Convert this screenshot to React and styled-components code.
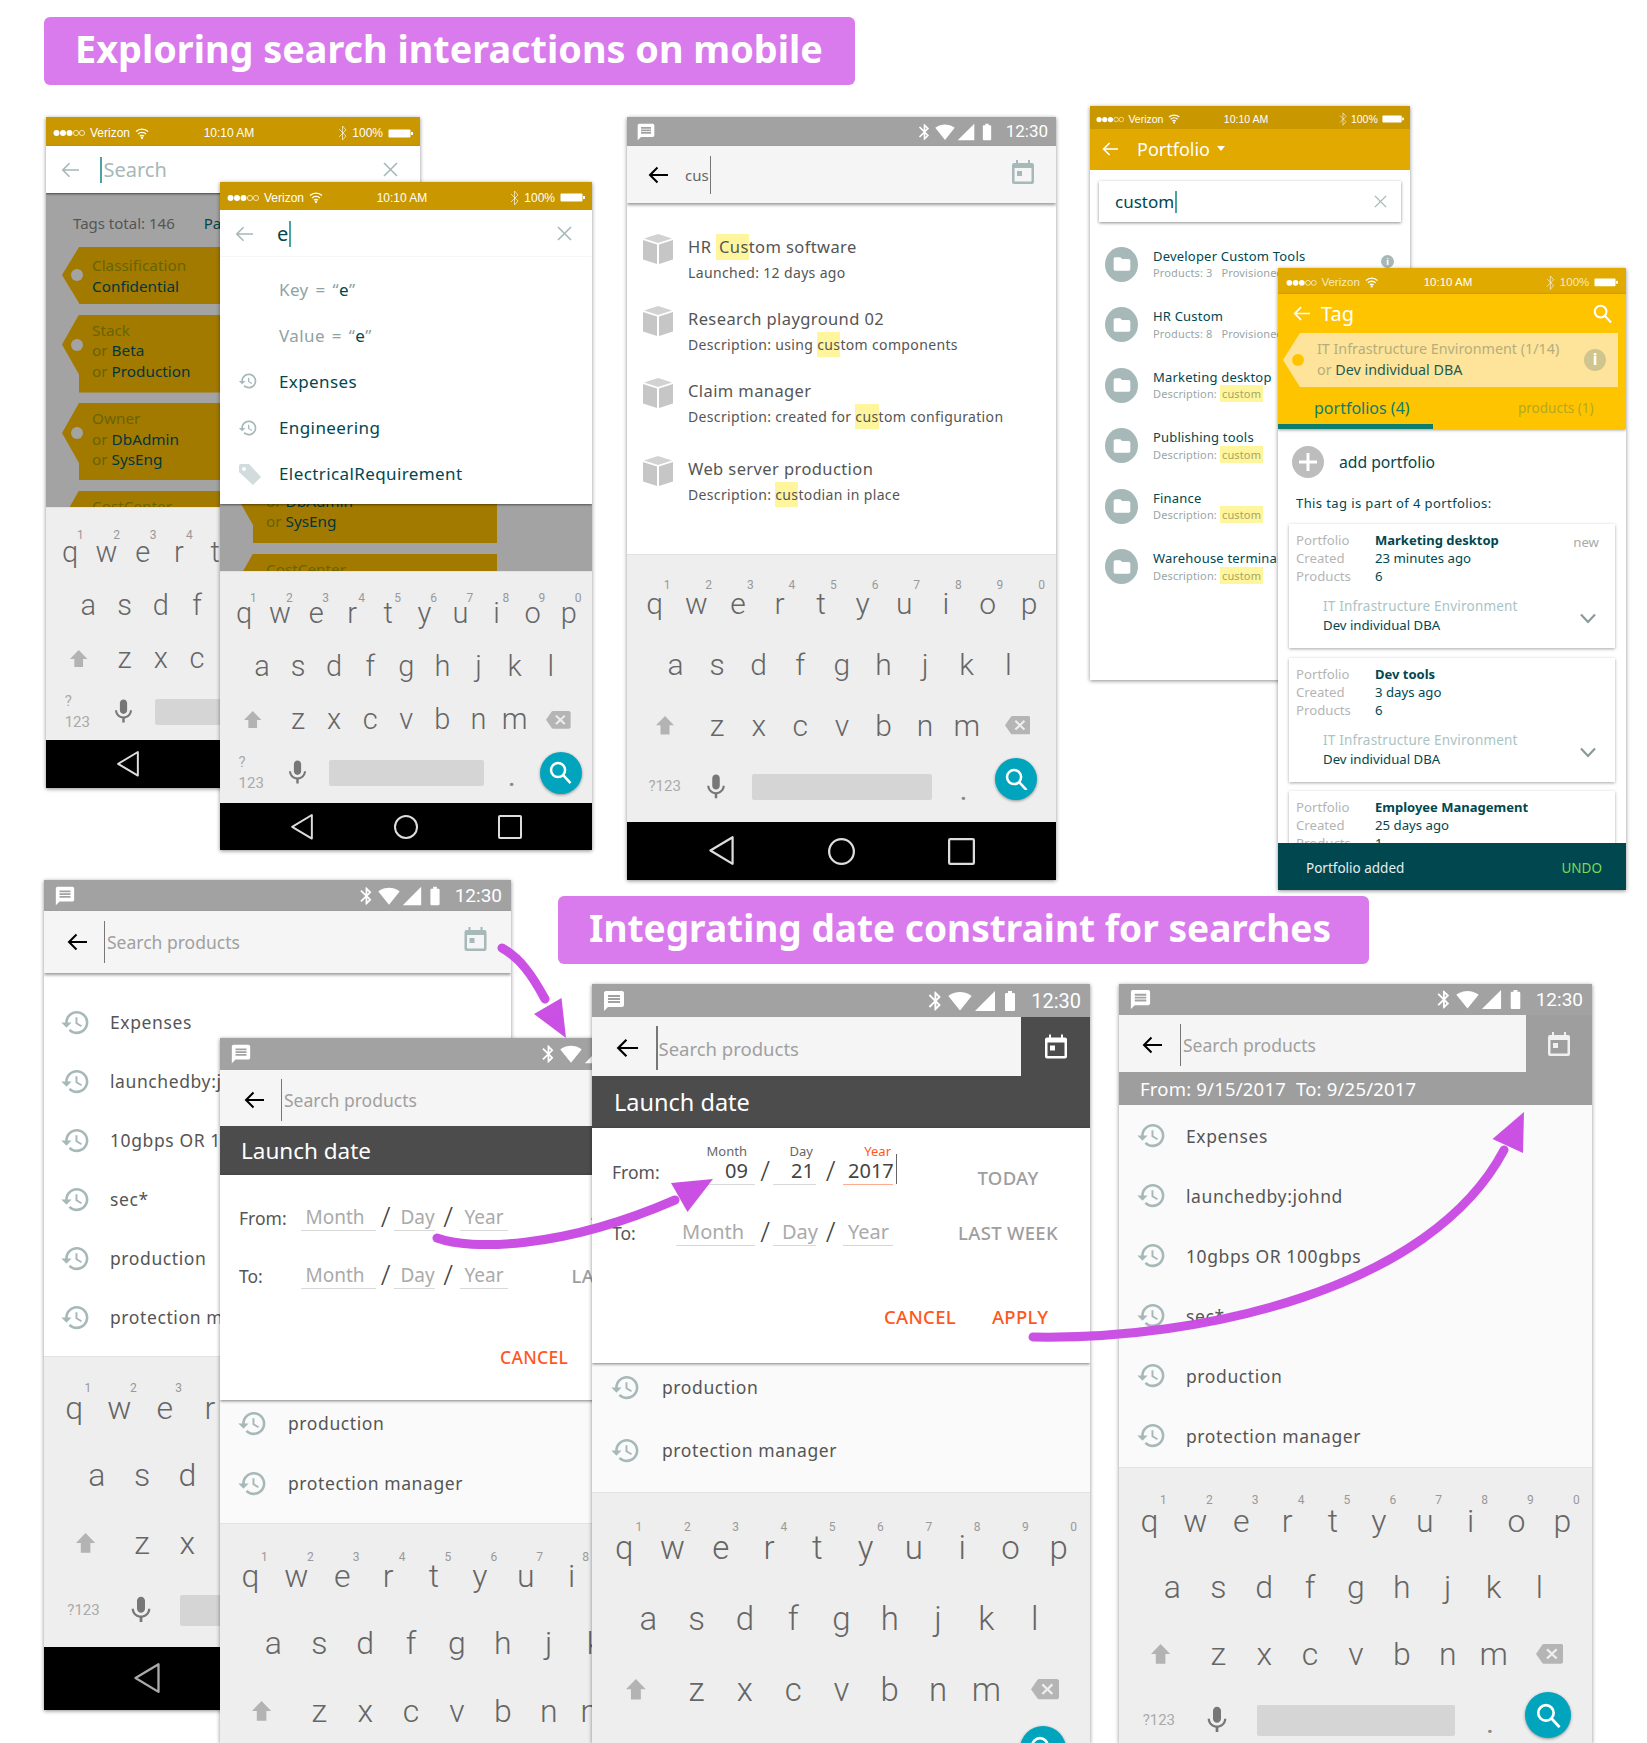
import React from 'react';
import styled, { createGlobalStyle } from 'styled-components';

const UI = `"Noto Sans", "Open Sans", sans-serif`;
const KB = `Roboto, "Noto Sans", sans-serif`;
const TEAL = '#00474f';
const SAGE = '#a6b8b8';

const Global = createGlobalStyle`
  html, body { margin: 0; padding: 0; background: #fff; }
  body { font-family: ${UI}; }
`;

const Canvas = styled.div`
  position: relative;
  width: 1647px;
  height: 1743px;
  overflow: hidden;
  background: #fff;
`;

const Banner = styled.div`
  position: absolute;
  left: ${p => p.$x}px;
  top: ${p => p.$y}px;
  width: ${p => p.$w}px;
  height: 68px;
  box-sizing: border-box;
  padding: 0 0 4px 31px;
  display: flex;
  align-items: center;
  background: #d97bec;
  border-radius: 6px;
  color: #fff;
  font: 700 ${p => p.$fs}px/1 ${UI};
  white-space: nowrap;
`;

const Phone = styled.div`
  position: absolute;
  isolation: isolate;
  left: ${p => p.$x}px;
  top: ${p => p.$y}px;
  width: ${p => p.$w}px;
  height: ${p => p.$h}px;
  display: flex;
  flex-direction: column;
  overflow: hidden;
  background: #fff;
  box-shadow: 0 1px 4px rgba(0, 0, 0, 0.45);
`;

/* ---------- status bars ---------- */
const IosBar = styled.div`
  flex: none;
  height: ${p => p.$h}px;
  box-sizing: border-box;
  padding-top: 3px;
  background: ${p => p.$bg};
  display: grid;
  grid-template-columns: 1fr auto 1fr;
  align-items: center;
  padding-left: ${p => p.$pad}px;
  padding-right: ${p => p.$pad}px;
  color: #fff;
  font: 400 ${p => p.$fs}px/1 "Liberation Sans", sans-serif;
`;
const IosLeft = styled.div`
  display: flex;
  align-items: center;
  gap: ${p => p.$gap}px;
`;
const IosRight = styled(IosLeft)`
  justify-content: flex-end;
`;
const IosTime = styled.div`
  margin-right: 8px;
`;
const Dim = styled.span`
  opacity: ${p => p.$o};
`;

const IosStatus = ({ h, bg, fs, pad = 7, dim = 1 }) => {
  const s = fs / 12;
  return (
    <IosBar $h={h} $bg={bg} $fs={fs} $pad={pad}>
      <IosLeft $gap={5 * s}>
        <svg width={32 * s} height={8 * s} viewBox="0 0 32 8">
          {[3.5, 10, 16.5].map(c => <circle key={c} cx={c} cy="4" r="3" fill="#fff" />)}
          {[23, 29].map(c => <circle key={c} cx={c} cy="4" r="2.6" fill="none" stroke="#fff" strokeWidth=".7" />)}
        </svg>
        <Dim $o={dim}>Verizon</Dim>
        <svg width={14 * s} height={11 * s} viewBox="0 0 14 11" fill="none" stroke="#fff" strokeWidth="1.4">
          <path d="M1 3.6a8.6 8.6 0 0 1 12 0M3 6a5.8 5.8 0 0 1 8 0M5 8.2a2.8 2.8 0 0 1 4 0" />
          <circle cx="7" cy="9.8" r=".5" />
        </svg>
      </IosLeft>
      <IosTime>10:10 AM</IosTime>
      <IosRight $gap={5 * s}>
        <svg width={9 * s} height={16 * s} viewBox="0 0 9 16" fill="none" stroke="#fff" strokeOpacity=".65" strokeWidth="1">
          <path d="M1 4l7 7-3.5 4V1L8 5 1 12" />
        </svg>
        <Dim $o={dim}>100%</Dim>
        <svg width={25 * s} height={9 * s} viewBox="0 0 25 9">
          <rect x=".5" y=".5" width="22" height="8" rx="1" fill="#fff" />
          <rect x="23" y="3" width="2" height="3" fill="#fff" />
        </svg>
      </IosRight>
    </IosBar>
  );
};

const DroidBar = styled.div`
  flex: none;
  height: ${p => p.$h}px;
  background: #a2a2a2;
  display: flex;
  align-items: center;
  padding: 0 ${p => p.$pad}px 0 ${p => p.$pad + 1}px;
  color: #fff;
  font: 400 ${p => p.$fs}px/1 ${KB};
`;
const DroidIcons = styled.div`
  margin-left: auto;
  display: flex;
  align-items: center;
  gap: 1px;
  margin-right: 9px;
`;
const Mirror = styled.svg`
  transform: scaleX(-1);
`;

const DroidStatus = ({ h, fs, pad = 8, s = 22 }) => (
  <DroidBar $h={h} $fs={fs} $pad={pad}>
    <Mirror width={s} height={s} viewBox="0 0 24 24" fill="#fff">
      <path d="M21.99 4c0-1.1-.89-2-1.99-2H4c-1.1 0-2 .9-2 2v12c0 1.1.9 2 2 2h14l4 4-.01-18zM18 14H6v-2h12v2zm0-3H6V9h12v2zm0-3H6V6h12v2z" />
    </Mirror>
    <DroidIcons>
      <svg width={s * 0.95} height={s} viewBox="0 0 24 24" fill="#fff"><path d="M17.71 7.71L12 2h-1v7.59L6.41 5 5 6.41 10.59 12 5 17.59 6.41 19 11 14.41V22h1l5.71-5.71-4.3-4.29 4.3-4.29zM13 5.83l1.88 1.88L13 9.59V5.83zm1.88 10.46L13 18.17v-3.76l1.88 1.88z" /></svg>
      <svg width={s} height={s} viewBox="0 0 24 24" fill="#fff"><path d="M12.01 21.49L23.64 7c-.45-.34-4.93-4-11.64-4C5.28 3 .81 6.66.36 7l11.63 14.49.01.01.01-.01z" /></svg>
      <svg width={s} height={s} viewBox="0 0 24 24" fill="#fff"><path d="M2 22h20V2z" /></svg>
      <svg width={s} height={s} viewBox="0 0 24 24" fill="#fff"><path d="M15.67 4H14V2h-4v2H8.33C7.6 4 7 4.6 7 5.33v15.33C7 21.4 7.6 22 8.33 22h7.33c.74 0 1.34-.6 1.34-1.33V5.33C17 4.6 16.4 4 15.67 4z" /></svg>
    </DroidIcons>
    12:30
  </DroidBar>
);

/* ---------- small icons ---------- */
const ArrowBack = ({ size = 20, color = '#000', w = 2 }) => (
  <svg width={size} height={size} viewBox="0 0 20 20" fill="none" stroke={color} strokeWidth={w}>
    <path d="M20 10H2M9.5 2.5L2 10l7.5 7.5" />
  </svg>
);
const Cross = ({ size = 15, color = SAGE }) => (
  <svg width={size} height={size} viewBox="0 0 15 15" stroke={color} strokeWidth="1.6" fill="none">
    <path d="M1 1l13 13M14 1L1 14" />
  </svg>
);
const Calendar = ({ w = 24, h = 26, color = SAGE }) => (
  <svg width={w} height={h} viewBox="0 0 24 26" fill={color}>
    <path fillRule="evenodd" d="M5 1h2v3h10V1h2v3h2a2 2 0 0 1 2 2v17a2 2 0 0 1-2 2H3a2 2 0 0 1-2-2V6a2 2 0 0 1 2-2h2zM3.5 9v13.5h17V9z" />
    <rect x="6" y="12" width="5" height="5" />
  </svg>
);
const History = ({ size = 31 }) => (
  <svg width={size} height={size} viewBox="0 0 24 24" fill={SAGE}>
    <path d="M13 3c-4.97 0-9 4.03-9 9H1l3.89 3.89.07.14L9 12H6c0-3.87 3.13-7 7-7s7 3.13 7 7-3.13 7-7 7c-1.93 0-3.68-.79-4.94-2.06l-1.42 1.42C8.27 19.99 10.51 21 13 21c4.97 0 9-4.03 9-9s-4.03-9-9-9zm-1 5v5l4.28 2.54.72-1.21-3.5-2.08V8H12z" />
  </svg>
);
const Cube = () => (
  <svg width="30" height="30" viewBox="0 0 30 30">
    <path d="M15 0l14 4.5L15 9 1 4.5z" fill="#d2d2d2" />
    <path d="M0 6l14 4.5V30L0 25.5zM30 6l-14 4.5V30l14-4.5z" fill="#c6c6c6" />
  </svg>
);
const Folder = ({ size = 20 }) => (
  <svg width={size} height={size} viewBox="0 0 24 24" fill="#fff">
    <path d="M10 4H4c-1.1 0-2 .9-2 2v12c0 1.1.9 2 2 2h16c1.1 0 2-.9 2-2V8c0-1.1-.9-2-2-2h-8l-2-2z" />
  </svg>
);
const Magnifier = ({ size = 20, color = '#fff', w = 2.2 }) => (
  <svg width={size} height={size} viewBox="0 0 20 20" fill="none" stroke={color} strokeWidth={w}>
    <circle cx="8" cy="8" r="6.2" />
    <path d="M12.5 12.5l6.5 7" />
  </svg>
);
const Chevron = () => (
  <svg width="16" height="11" viewBox="0 0 16 11" fill="none" stroke="#8a9a9a" strokeWidth="2.2">
    <path d="M1 1.5l7 7.5 7-7.5" />
  </svg>
);
const PriceTag = () => (
  <svg width="24" height="24" viewBox="0 0 24 24" fill="#d3dcdc">
    <path d="M1 4a2 2 0 0 1 2-2h8l12 13-8 8L1 10zM6 5a2 2 0 1 0 0 4 2 2 0 0 0 0-4z" fillRule="evenodd" />
  </svg>
);

/* ---------- search bars ---------- */
const SearchRow = styled.div`
  flex: none;
  height: ${p => p.$h}px;
  background: ${p => p.$bg || '#f5f5f5'};
  display: flex;
  position: relative;
  z-index: 1;
  box-shadow: ${p => (p.$flat ? 'none' : '0 2px 3px rgba(0,0,0,0.4)')};
`;
const SearchField = styled.div`
  flex: ${p => (p.$w ? `0 0 ${p.$w}px` : '1')};
  box-sizing: border-box;
  padding-top: ${p => p.$pt || 0}px;
  background: #f5f5f5;
  display: flex;
  align-items: center;
  color: #a0a0a0;
  font-size: ${p => p.$fs}px;
`;
const BackSlot = styled.div`
  flex: none;
  width: ${p => p.$w}px;
  box-sizing: border-box;
  padding-left: ${p => p.$pl}px;
  display: flex;
  align-items: center;
`;
const Caret = styled.i`
  flex: none;
  width: ${p => p.$t || 1}px;
  height: ${p => p.$h}px;
  background: ${p => p.$c || '#777'};
  margin-right: ${p => p.$mr || 0}px;
  margin-left: ${p => p.$ml || 0}px;
`;
const CalInline = styled.div`
  margin-left: auto;
  margin-right: ${p => p.$mr}px;
  margin-top: -6px;
  display: flex;
`;
const CalSlot = styled.div`
  flex: 1;
  display: flex;
  align-items: center;
  justify-content: center;
`;
const Typed = styled.span`
  color: #666;
`;

/* ---------- white ios search ---------- */
const WhiteSearch = styled.div`
  flex: none;
  height: ${p => p.$h}px;
  background: #fff;
  display: flex;
  align-items: center;
  padding-left: ${p => p.$pl}px;
  padding-right: ${p => p.$pr}px;
  position: relative;
  z-index: 1;
  box-shadow: ${p => p.$shadow};
  color: ${p => p.$color};
  font-size: 20px;
`;
const WhiteLead = styled.div`
  flex: none;
  width: ${p => p.$w}px;
  display: flex;
`;
const WhiteEnd = styled.div`
  margin-left: auto;
  display: flex;
`;

/* ---------- keyboard ---------- */
const KbWrap = styled.div`
  flex: 1;
  min-height: 0;
  background: #eeeeee;
  padding-top: ${p => p.$top}px;
  border-top: 1px solid #e2e2e2;
  font-family: ${KB};
  color: #666;
`;
const KbRow = styled.div`
  display: flex;
  align-items: center;
  height: ${p => p.$h}px;
  & > :first-child {
    margin-left: ${p => p.$indent}%;
  }
`;
const Key = styled.span`
  flex: 0 0 9.7%;
  position: relative;
  text-align: center;
  font-weight: 300;
  font-size: ${p => p.$fs}px;
  line-height: 1;
  white-space: nowrap;
`;
const Hint = styled.sup`
  position: absolute;
  left: calc(50% + ${p => p.$off}px);
  top: -${p => p.$up}px;
  font-size: 12px;
  font-weight: 400;
  line-height: 1;
  color: #999;
`;
const ShiftSlot = styled.span`
  flex: 0 0 14.65%;
  display: flex;
  justify-content: center;
`;
const BackspaceSlot = styled.span`
  flex: 0 0 14%;
  display: flex;
  justify-content: center;
`;
const SymSlot = styled.span`
  flex: 0 0 15.4%;
  box-sizing: border-box;
  padding-left: 5%;
  color: #aaa;
  font-size: ${p => p.$fs}px;
  font-weight: 400;
  line-height: 1.35;
`;
const MicSlot = styled.span`
  flex: 0 0 10.8%;
  display: flex;
  justify-content: center;
`;
const SpaceBar = styled.span`
  flex: 0 0 41.8%;
  margin-left: 3%;
  height: ${p => p.$h}px;
  background: #d5d5d5;
  border-radius: 2px;
`;
const DotSlot = styled.span`
  flex: 0 0 14.9%;
  text-align: center;
  color: #888;
  font-size: 22px;
  font-weight: 700;
  line-height: 1;
  padding-top: 12px;
`;
const Fab = styled.span`
  flex: none;
  width: ${p => p.$d}px;
  height: ${p => p.$d}px;
  margin-top: ${p => p.$lift || 0}px;
  border-radius: 50%;
  background: #00a5bd;
  box-shadow: 0 1px 3px rgba(0, 0, 0, 0.4);
  display: flex;
  align-items: center;
  justify-content: center;
`;

const Keyboard = ({ top, pitch, fs, up, off = 10.5, stacked, bar = 26, fab = 42, lift }) => (
  <KbWrap $top={top}>
    <KbRow $h={pitch} $indent={1.6}>
      {'qwertyuiop'.split('').map((k, i) => (
        <Key key={k} $fs={fs}>{k}<Hint $up={up} $off={off}>{(i + 1) % 10}</Hint></Key>
      ))}
    </KbRow>
    <KbRow $h={pitch} $indent={6.45}>
      {'asdfghjkl'.split('').map(k => <Key key={k} $fs={fs}>{k}</Key>)}
    </KbRow>
    <KbRow $h={pitch} $indent={1.5}>
      <ShiftSlot>
        <svg width={fs * 0.6} height={fs * 0.62} viewBox="0 0 20 24" preserveAspectRatio="none" fill="#b3b3b3"><path d="M10 0l10 12h-5v12H5V12H0z" /></svg>
      </ShiftSlot>
      {'zxcvbnm'.split('').map(k => <Key key={k} $fs={fs}>{k}</Key>)}
      <BackspaceSlot>
        <svg width={fs * 0.85} height={fs * 0.68} viewBox="0 2 24 20" preserveAspectRatio="none" fill="#b5b5b5"><path d="M22 3H7c-.69 0-1.23.35-1.59.88L0 12l5.41 8.11c.36.53.9.89 1.59.89h15c1.1 0 2-.9 2-2V5c0-1.1-.9-2-2-2zm-3 12.59L17.59 17 14 13.41 10.41 17 9 15.59 12.59 12 9 8.41 10.41 7 14 10.59 17.59 7 19 8.41 15.41 12 19 15.59z" /></svg>
      </BackspaceSlot>
    </KbRow>
    <KbRow $h={pitch} $indent={0}>
      <SymSlot $fs={15}>{stacked ? <>?<br />123</> : '?123'}</SymSlot>
      <MicSlot>
        <svg width={fs} height={fs} viewBox="0 0 24 24" fill="#777"><path d="M12 14c1.66 0 3-1.34 3-3V5c0-1.66-1.34-3-3-3S9 3.34 9 5v6c0 1.66 1.34 3 3 3zm5.3-3c0 3-2.54 5.1-5.3 5.1S6.7 14 6.7 11H5c0 3.41 2.72 6.23 6 6.72V21h2v-3.28c3.28-.48 6-3.3 6-6.72h-1.7z" /></svg>
      </MicSlot>
      <SpaceBar $h={bar} />
      <DotSlot>.</DotSlot>
      <Fab $d={fab} $lift={lift}><Magnifier size={fab * 0.54} /></Fab>
    </KbRow>
  </KbWrap>
);

/* ---------- nav bar ---------- */
const NavBar = styled.div`
  flex: none;
  height: ${p => p.$h}px;
  background: #000;
  display: grid;
  grid-template-columns: repeat(3, 1fr);
  padding: 0 8%;
  align-items: center;
  justify-items: center;
`;
const Nav = ({ h, s = 24, color = '#ddd' }) => (
  <NavBar $h={h}>
    <svg width={s} height={s * 1.15} viewBox="0 0 24 28" fill="none" stroke={color} strokeWidth="2" strokeLinejoin="round"><path d="M22 2v24L2 14z" /></svg>
    <svg width={s} height={s} viewBox="0 0 24 24" fill="none" stroke={color} strokeWidth="2"><circle cx="12" cy="12" r="11" /></svg>
    <svg width={s} height={s} viewBox="0 0 24 24" fill="none" stroke={color} strokeWidth="2"><rect x="1" y="1" width="22" height="22" rx="1" /></svg>
  </NavBar>
);

/* ---------- dimmed tag list ---------- */
const Dimmed = styled.div`
  flex: none;
  height: ${p => p.$h}px;
  background: #a3a3a3;
  overflow: hidden;
  padding-left: ${p => p.$pl}px;
  font-size: 15px;
`;
const TotalsRow = styled.div`
  display: flex;
  height: 20px;
  margin-top: 20px;
  line-height: 20px;
  padding-left: 11px;
  color: #555;
`;
const Pa = styled.span`
  margin-left: 29px;
  color: ${TEAL};
`;
const TagList = styled.div`
  display: flex;
  flex-direction: column;
  gap: 10.5px;
  margin-top: ${p => p.$mt}px;
`;
const TagShape = styled.div`
  position: relative;
  flex: none;
  box-sizing: border-box;
  width: ${p => p.$w}px;
  height: ${p => p.$h}px;
  padding: ${p => p.$pt}px 0 0 ${p => p.$pl || 30}px;
  background: ${p => p.$bg || '#a37a00'};
  clip-path: polygon(17px 0, 100% 0, 100% 100%, 17px 100%, 17px ${p => p.$tip * 2}px, 0 ${p => p.$tip}px);
  font-size: ${p => p.$fs || 15.3}px;
  line-height: 20.5px;
  color: ${p => p.$key || '#686400'};
`;
const TagHole = styled.i`
  position: absolute;
  left: ${p => p.$l || 9}px;
  top: ${p => p.$tip - 6}px;
  width: 12px;
  height: 12px;
  border-radius: 50%;
  background: ${p => p.$bg || '#a3a3a3'};
`;
const TagLine = styled.div`
  white-space: nowrap;
`;
const TagVal = styled.span`
  color: ${p => p.$c || '#00363c'};
`;

const Tag = ({ w, h, tip, pt, lines }) => (
  <TagShape $w={w} $h={h} $tip={tip} $pt={pt}>
    <TagHole $tip={tip} />
    {lines.map((l, i) => (
      <TagLine key={i}>{l[0]}{l[1] && <> <TagVal>{l[1]}</TagVal></>}</TagLine>
    ))}
  </TagShape>
);

/* ---------- dropdown of phone B ---------- */
const SuggestList = styled.div`
  flex: none;
  height: 247px;
  background: #fff;
  position: relative;
  z-index: 1;
  padding-top: 17px;
  box-sizing: border-box;
  box-shadow: 0 1px 2px rgba(0, 0, 0, 0.5);
  display: flex;
  flex-direction: column;
  gap: 16.2px;
  font-size: 17px;
  letter-spacing: 0.4px;
`;
const Suggest = styled.div`
  height: 30px;
  display: flex;
  align-items: center;
  white-space: pre;
  word-spacing: ${p => (p.$muted ? '2px' : '0')};
  color: ${p => (p.$muted ? '#8fa3a3' : TEAL)};
`;
const SuggestIcon = styled.span`
  flex: none;
  width: 59px;
  box-sizing: border-box;
  padding-left: 18px;
  display: flex;
`;
const Em = styled.span`
  color: ${TEAL};
`;

/* ---------- result list of phone C ---------- */
const Results = styled.div`
  flex: none;
  height: 351px;
  box-sizing: border-box;
  background: #fff;
  padding: 31px 0 0 16px;
  display: flex;
  flex-direction: column;
`;
const ResultRow = styled.div`
  display: flex;
  gap: 15px;
  height: ${p => p.$h}px;
`;
const ResultText = styled.div`
  color: #555;
  font-size: 14px;
  letter-spacing: 0.35px;
  line-height: 25px;
  white-space: nowrap;
`;
const ResultTitle = styled.div`
  font-size: 16.5px;
  letter-spacing: 0.4px;
  line-height: 26px;
`;
const Hi = styled.span`
  display: inline-block;
  background: #fff59d;
  padding-left: ${p => p.$p || 0}px;
`;

/* ---------- history lists ---------- */
const HistoryList = styled.div`
  flex: none;
  height: ${p => p.$h}px;
  box-sizing: border-box;
  background: ${p => p.$bg || '#fafafa'};
  padding: ${p => p.$pt}px 0 0 ${p => p.$pl}px;
  display: flex;
  flex-direction: column;
  gap: ${p => p.$gap}px;
  overflow: hidden;
  color: #555;
  font-size: 17.5px;
  letter-spacing: 0.6px;
`;
const HistoryRow = styled.div`
  flex: none;
  height: 30px;
  display: flex;
  align-items: center;
  white-space: nowrap;
`;
const HistoryIcon = styled.span`
  flex: none;
  width: ${p => p.$w}px;
  display: flex;
`;

const HistoryItems = ({ items, iw }) => items.map(t => (
  <HistoryRow key={t}>
    <HistoryIcon $w={iw}><History /></HistoryIcon>{t}
  </HistoryRow>
));

/* ---------- date form ---------- */
const DarkTitle = styled.div`
  flex: none;
  height: ${p => p.$h}px;
  background: #4c4c4c;
  color: #fff;
  display: flex;
  align-items: center;
  padding-left: ${p => p.$pl}px;
  font-size: ${p => p.$fs}px;
`;
const DatePanel = styled.div`
  flex: none;
  height: ${p => p.$h}px;
  box-sizing: border-box;
  background: #fff;
  position: relative;
  z-index: 1;
  box-shadow: 0 1px 3px rgba(0, 0, 0, 0.5);
  padding-top: ${p => p.$pt}px;
  display: flex;
  flex-direction: column;
`;
const DateRow = styled.div`
  flex: none;
  height: 37px;
  display: flex;
  align-items: flex-end;
  margin-bottom: ${p => p.$mb}px;
  padding-left: ${p => p.$pl}px;
`;
const DateLabel = styled.span`
  flex: none;
  width: ${p => p.$w}px;
  box-sizing: border-box;
  color: #555;
  font-size: 17.5px;
  line-height: 26px;
`;
const DateField = styled.span`
  flex: none;
  position: relative;
  width: ${p => p.$w}px;
  box-sizing: border-box;
  border-bottom: 1.5px solid ${p => p.$line || '#d8d8d8'};
  padding-left: ${p => p.$pl || 0}px;
  padding-right: ${p => p.$pr || 0}px;
  text-align: ${p => (p.$pr !== undefined ? 'right' : 'left')};
  color: ${p => (p.$filled ? '#444' : '#aaa')};
  font-size: ${p => p.$fs}px;
  line-height: 26px;
  white-space: nowrap;
`;
const FieldCaption = styled.span`
  position: absolute;
  right: ${p => p.$r}px;
  top: -15px;
  font-size: 13px;
  line-height: 16px;
  color: ${p => p.$c || '#666'};
`;
const FieldCaret = styled.i`
  position: absolute;
  left: 100%;
  bottom: 0;
  margin-left: 3px;
  width: 1px;
  height: 30px;
  background: #666;
`;
const DateSep = styled.span`
  flex: none;
  width: ${p => p.$w}px;
  box-sizing: border-box;
  padding-left: 2px;
  text-align: center;
  color: #444;
  font-size: 28px;
  line-height: 30px;
  font-weight: 300;
`;
const QuickAction = styled.span`
  flex: none;
  width: 150px;
  margin-left: ${p => p.$ml}px;
  margin-bottom: ${p => p.$mb || 0}px;
  text-align: center;
  color: #9e9e9e;
  font-size: 18.5px;
  letter-spacing: 0.3px;
  font-weight: 500;
  line-height: 26px;
  white-space: nowrap;
`;
const DateActions = styled.div`
  display: flex;
  margin-top: ${p => p.$mt}px;
  padding-left: ${p => p.$pl}px;
  gap: ${p => p.$gap}px;
  color: #ff5722;
  font-size: ${p => p.$fs}px;
  letter-spacing: 0.3px;
  font-weight: 500;
  line-height: 24px;
`;
const RangeBand = styled.div`
  flex: none;
  height: 33px;
  margin-top: -0.5px;
  background: #9e9e9e;
  color: #fff;
  display: flex;
  align-items: center;
  padding-left: 21px;
  font-size: 18.5px;
  letter-spacing: 0.2px;
`;

/* ---------- phone D ---------- */
const Header = styled.div`
  flex: none;
  height: ${p => p.$h}px;
  box-sizing: border-box;
  background: ${p => p.$bg};
  color: #fff;
  display: flex;
  align-items: center;
  padding: 0 ${p => p.$pr || 0}px ${p => p.$pb || 0}px ${p => p.$pl}px;
  font-size: ${p => p.$fs}px;
`;
const HeaderTitle = styled.span`
  margin-left: ${p => p.$ml}px;
`;
const CaretDown = styled.i`
  width: 0;
  height: 0;
  margin-left: 7px;
  border: 4px solid transparent;
  border-top: 5px solid #fff;
  border-bottom: 0;
`;
const CardSearch = styled.div`
  flex: none;
  height: 41px;
  margin: 11px 9px 18px;
  background: #fff;
  box-shadow: 0 1px 3px rgba(0, 0, 0, 0.45);
  display: flex;
  align-items: center;
  padding: 0 14px 0 16px;
  color: ${TEAL};
  font-size: 17px;
`;
const PortfolioList = styled.div`
  display: flex;
  flex-direction: column;
  gap: 12.5px;
  padding-left: 15px;
`;
const PortfolioRow = styled.div`
  position: relative;
  height: 48px;
  display: flex;
  align-items: center;
  gap: 15px;
`;
const FolderBadge = styled.span`
  flex: none;
  width: 33px;
  height: 35px;
  border-radius: 50%;
  background: ${SAGE};
  display: flex;
  align-items: center;
  justify-content: center;
`;
const PortfolioText = styled.div`
  padding-top: 1px;
  line-height: 16.5px;
  white-space: nowrap;
  font-size: 13px;
  letter-spacing: 0.2px;
  color: ${TEAL};
`;
const PortfolioSub = styled.div`
  margin-top: 1px;
  font-size: 11px;
  letter-spacing: 0.15px;
  color: #9aa6a6;
`;
const Mark = styled.span`
  background: #fff59d;
  padding: 1px 2px;
  color: #a6a664;
`;
const InfoDot = styled.span`
  position: absolute;
  right: ${p => p.$r}px;
  top: ${p => p.$t}px;
  width: ${p => p.$d}px;
  height: ${p => p.$d}px;
  border-radius: 50%;
  background: ${p => p.$bg};
  color: #fff;
  display: flex;
  align-items: center;
  justify-content: center;
  font-size: ${p => p.$d * 0.7}px;
  font-weight: 700;
  line-height: 1;
`;

/* ---------- phone E ---------- */
const YellowBand = styled.div`
  flex: none;
  background: #ffc400;
  box-shadow: 0 1px 3px rgba(0, 0, 0, 0.4);
  position: relative;
  z-index: 1;
`;
const HeaderEnd = styled.span`
  margin-left: auto;
  display: flex;
`;
const TagRowWrap = styled.div`
  padding: 0 8px 0 5px;
`;
const Tabs = styled.div`
  height: 42px;
  display: flex;
`;
const Tab = styled.div`
  flex: ${p => (p.$w ? `0 0 ${p.$w}px` : '1')};
  box-sizing: border-box;
  padding-top: 4px;
  padding-left: ${p => p.$pl}px;
  display: flex;
  align-items: center;
  white-space: nowrap;
  font-size: ${p => p.$fs}px;
  color: ${p => p.$c};
  border-bottom: ${p => (p.$on ? '5px solid #0e7d6d' : '5px solid transparent')};
`;
const TagBody = styled.div`
  flex: 1;
  min-height: 0;
  overflow: hidden;
  padding: 0 11px;
  color: ${TEAL};
  display: flex;
  flex-direction: column;
`;
const AddRow = styled.div`
  flex: none;
  height: 32px;
  margin-top: 17px;
  padding-left: 3px;
  display: flex;
  align-items: center;
  gap: 15px;
  font-size: 15.7px;
`;
const AddBadge = styled.span`
  flex: none;
  width: 32px;
  height: 32px;
  border-radius: 50%;
  background: #bdbdbd;
  display: flex;
  align-items: center;
  justify-content: center;
`;
const PartOf = styled.div`
  flex: none;
  margin: 15px 0 11px 7px;
  font-size: 13px;
  letter-spacing: 0.4px;
  line-height: 20px;
`;
const PCard = styled.div`
  flex: none;
  position: relative;
  height: 124px;
  box-sizing: border-box;
  padding: 7px 7px;
  margin-bottom: 9.5px;
  background: #fff;
  box-shadow: 0 1px 3px rgba(0, 0, 0, 0.35);
  font-size: 13.2px;
  line-height: 18px;
`;
const PGrid = styled.div`
  display: grid;
  grid-template-columns: 79px 1fr;
  white-space: nowrap;
`;
const PKey = styled.span`
  color: #b5b5b5;
`;
const PTitle = styled.span`
  font-weight: 700;
  font-size: 13px;
`;
const PSub = styled.div`
  margin: 12px 0 0 27px;
  line-height: 19px;
  white-space: nowrap;
`;
const PSubKey = styled.div`
  color: #a9c4c4;
  font-size: 13.5px;
  letter-spacing: 0.2px;
`;
const PNew = styled.span`
  position: absolute;
  right: 16px;
  top: 9px;
  color: #aaa;
`;
const PChevron = styled.span`
  position: absolute;
  right: 19px;
  top: 89px;
  display: flex;
`;
const Snack = styled.div`
  flex: none;
  height: 47px;
  box-sizing: border-box;
  padding: 3px 24px 0 28px;
  background: #00474f;
  color: #e8eeee;
  display: flex;
  align-items: center;
  justify-content: space-between;
  font-size: 13.5px;
`;
const Undo = styled.span`
  color: #7ed957;
  font-size: 13.5px;
`;

/* ---------- data ---------- */
const HISTORY = ['Expenses', 'launchedby:johnd', '10gbps OR 100gbps', 'sec*', 'production', 'protection manager'];

const PORTFOLIOS = [
  ['Developer Custom Tools', 'Products: 3\u00a0\u00a0\u00a0Provisioned: 12'],
  ['HR Custom', 'Products: 8\u00a0\u00a0\u00a0Provisioned: 4'],
  ['Marketing desktop'],
  ['Publishing tools'],
  ['Finance'],
  ['Warehouse terminal'],
];

const CARDS = [
  ['Marketing desktop', '23 minutes ago', '6', true, true],
  ['Dev tools', '3 days ago', '6', false, true],
  ['Employee Management', '25 days ago', '1', false, false],
];

const RESULTS = [
  [<>HR <Hi $p={3}>Cus</Hi>tom software</>, 'Launched: 12 days ago', 72],
  ['Research playground 02', <>Description: using <Hi>cus</Hi>tom components</>, 72],
  ['Claim manager', <>Description: created for <Hi>cus</Hi>tom configuration</>, 78],
  ['Web server production', <>Description: <Hi>cus</Hi>todian in place</>, 72],
];

const DateForm = ({ cfg, filled }) => (
  <DatePanel $h={cfg.h} $pt={cfg.pt}>
    <DateRow $mb={cfg.gap} $pl={cfg.pl}>
      <DateLabel $w={cfg.label}>From:</DateLabel>
      {filled ? (
        <>
          <DateField $w={cfg.month} $fs={cfg.fs} $pr={7} $filled>09<FieldCaption $r={8}>Month</FieldCaption></DateField>
          <DateSep $w={cfg.sep1}>/</DateSep>
          <DateField $w={cfg.day} $fs={cfg.fs} $pr={2} $filled>21<FieldCaption $r={3}>Day</FieldCaption></DateField>
          <DateSep $w={cfg.sep2}>/</DateSep>
          <DateField $w={cfg.year} $fs={cfg.fs} $pl={5} $filled $line="#ffab91">2017<FieldCaption $r={2} $c="#ff5722">Year</FieldCaption><FieldCaret /></DateField>
        </>
      ) : (
        <>
          <DateField $w={cfg.month} $fs={cfg.fs} $pl={cfg.mpl}>Month</DateField>
          <DateSep $w={cfg.sep1}>/</DateSep>
          <DateField $w={cfg.day} $fs={cfg.fs} $pl={cfg.dpl}>Day</DateField>
          <DateSep $w={cfg.sep2}>/</DateSep>
          <DateField $w={cfg.year} $fs={cfg.fs} $pl={cfg.ypl}>Year</DateField>
        </>
      )}
      <QuickAction $ml={cfg.qml} $mb={-6}>TODAY</QuickAction>
    </DateRow>
    <DateRow $mb={0} $pl={cfg.pl}>
      <DateLabel $w={cfg.label}>To:</DateLabel>
      <DateField $w={cfg.month} $fs={cfg.fs} $pl={cfg.mpl}>Month</DateField>
      <DateSep $w={cfg.sep1}>/</DateSep>
      <DateField $w={cfg.day} $fs={cfg.fs} $pl={cfg.dpl}>Day</DateField>
      <DateSep $w={cfg.sep2}>/</DateSep>
      <DateField $w={cfg.year} $fs={cfg.fs} $pl={cfg.ypl}>Year</DateField>
      <QuickAction $ml={cfg.qml}>LAST WEEK</QuickAction>
    </DateRow>
    <DateActions $mt={cfg.amt} $pl={cfg.apl} $gap={cfg.agap} $fs={cfg.afs}><span>CANCEL</span><span>APPLY</span></DateActions>
  </DatePanel>
);

const FORM_G = { h: 225, pt: 19, gap: 21, pl: 19, label: 61.5, month: 75, sep1: 18, day: 41, sep2: 25, year: 48, fs: 19, mpl: 5, dpl: 7, ypl: 5, qml: 39, amt: 56, apl: 280, agap: 34, afs: 17.5 };
const FORM_H = { h: 235, pt: 20, gap: 24, pl: 20, label: 64, month: 79, sep1: 18, day: 43, sep2: 27, year: 50, fs: 20, mpl: 6, dpl: 9, ypl: 5, qml: 40, amt: 59, apl: 292, agap: 36, afs: 18.5 };

export default function App() {
  return (
    <Canvas>
      <Global />
      <Banner $x={44} $y={17} $w={811} $fs={37.8}>Exploring search interactions on mobile</Banner>

      {/* A */}
      <Phone $x={46} $y={117} $w={374} $h={671}>
        <IosStatus h={29} bg="#c99700" fs={12} />
        <WhiteSearch $h={47} $pl={15} $pr={22} $shadow="0 1px 2px rgba(0,0,0,0.6)" $color={SAGE}>
          <WhiteLead $w={39}><ArrowBack size={18} color={SAGE} w={1.8} /></WhiteLead>
          <Caret $h={26} $t={1.5} $c="#4aa3a0" $mr={2} />Search
          <WhiteEnd><Cross /></WhiteEnd>
        </WhiteSearch>
        <Dimmed $h={314} $pl={16}>
          <TotalsRow>Tags total: 146<Pa>Pa</Pa></TotalsRow>
          <TagList $mt={14}>
            <Tag w={261} h={57} tip={28} pt={8} lines={[['Classification'], ['', 'Confidential']]} />
            <Tag w={261} h={78} tip={30} pt={5} lines={[['Stack'], ['or', 'Beta'], ['or', 'Production']]} />
            <Tag w={261} h={77} tip={30} pt={5} lines={[['Owner'], ['or', 'DbAdmin'], ['or', 'SysEng']]} />
            <Tag w={261} h={60} tip={30} pt={5} lines={[['CostCenter']]} />
          </TagList>
        </Dimmed>
        <Keyboard top={18} pitch={53} fs={29} up={9} off={7} stacked />
        <Nav h={48} />
      </Phone>

      {/* B */}
      <Phone $x={220} $y={182} $w={372} $h={668}>
        <IosStatus h={28} bg="#c99700" fs={12} />
        <WhiteSearch $h={47} $pl={15} $pr={20} $shadow="0 1px 1px rgba(0,0,0,0.1)" $color={TEAL}>
          <WhiteLead $w={42}><ArrowBack size={18} color={SAGE} w={1.8} /></WhiteLead>
          e<Caret $h={26} $t={1.5} $c="#4aa3a0" $ml={1} />
          <WhiteEnd><Cross /></WhiteEnd>
        </WhiteSearch>
        <SuggestList>
          <Suggest $muted><SuggestIcon />Key = “<Em>e</Em>”</Suggest>
          <Suggest $muted><SuggestIcon />Value = “<Em>e</Em>”</Suggest>
          <Suggest><SuggestIcon><History size={20} /></SuggestIcon>Expenses</Suggest>
          <Suggest><SuggestIcon><History size={20} /></SuggestIcon>Engineering</Suggest>
          <Suggest><SuggestIcon><PriceTag /></SuggestIcon>ElectricalRequirement</Suggest>
        </SuggestList>
        <Dimmed $h={67} $pl={16}>
          <TagList $mt={-39}>
            <Tag w={261} h={78} tip={30} pt={5} lines={[['Owner'], ['or', 'DbAdmin'], ['or', 'SysEng']]} />
            <Tag w={261} h={60} tip={30} pt={5} lines={[['CostCenter']]} />
          </TagList>
        </Dimmed>
        <Keyboard top={15} pitch={53} fs={29} up={7} off={6} stacked />
        <Nav h={47} />
      </Phone>

      {/* C */}
      <Phone $x={627} $y={117} $w={429} $h={763}>
        <DroidStatus h={29} fs={17} s={20} />
        <SearchRow $h={57}>
          <SearchField $fs={15}>
            <BackSlot $w={58} $pl={21}><ArrowBack /></BackSlot>
            <Typed>cus</Typed><Caret $h={38} $ml={1} />
            <CalInline $mr={21}><Calendar /></CalInline>
          </SearchField>
        </SearchRow>
        <Results>
          {RESULTS.map(([t, s, h], i) => (
            <ResultRow key={i} $h={h}>
              <Cube />
              <ResultText><ResultTitle>{t}</ResultTitle>{s}</ResultText>
            </ResultRow>
          ))}
        </Results>
        <Keyboard top={18} pitch={61} fs={30} up={10} off={9} lift={-15} />
        <Nav h={58} s={27} />
      </Phone>

      {/* D */}
      <Phone $x={1090} $y={106} $w={320} $h={574}>
        <IosStatus h={23} bg="#c99700" fs={10.5} pad={6} />
        <Header $h={41} $bg="#e2a900" $pl={12} $pb={2} $fs={18}>
          <ArrowBack size={16} color="#fff" />
          <HeaderTitle $ml={19}>Portfolio</HeaderTitle><CaretDown />
        </Header>
        <CardSearch>
          custom<Caret $h={22} $t={1.5} $c="#4aa3a0" $ml={1} />
          <WhiteEnd><Cross size={13} /></WhiteEnd>
        </CardSearch>
        <PortfolioList>
          {PORTFOLIOS.map(([t, s], i) => (
            <PortfolioRow key={t}>
              <FolderBadge><Folder /></FolderBadge>
              <PortfolioText>
                {t}
                <PortfolioSub>{s || <>Description: <Mark>custom</Mark></>}</PortfolioSub>
              </PortfolioText>
              {i === 0 && <InfoDot $r={16} $t={15} $d={13} $bg={SAGE}>i</InfoDot>}
            </PortfolioRow>
          ))}
        </PortfolioList>
      </Phone>

      {/* E */}
      <Phone $x={1278} $y={268} $w={348} $h={622}>
        <IosStatus h={26} bg="#e0aa00" fs={11.5} pad={8} dim={0.75} />
        <YellowBand>
          <Header $h={39} $bg="transparent" $pl={15} $pr={14} $fs={20}>
            <ArrowBack size={17} color="#fff" />
            <HeaderTitle $ml={11}>Tag</HeaderTitle>
            <HeaderEnd><Magnifier size={19} /></HeaderEnd>
          </Header>
          <TagRowWrap>
            <TagShape $w={335} $h={54} $tip={27} $pt={6} $pl={34} $bg="#fde49a" $fs={14.3} $key="#b5ae7c">
              <TagHole $tip={27} $l={9} $bg="#ffc400" />
              <TagLine>IT Infrastructure Environment (1/14)</TagLine>
              <TagLine>or <TagVal $c="#1f5a52">Dev individual DBA</TagVal></TagLine>
              <InfoDot $r={12} $t={16} $d={22} $bg="#cfc58f">i</InfoDot>
            </TagShape>
          </TagRowWrap>
          <Tabs>
            <Tab $w={155} $pl={36} $fs={16} $c="#0e7d6d" $on>portfolios (4)</Tab>
            <Tab $pl={85} $fs={13.5} $c="#b4a820">products (1)</Tab>
          </Tabs>
        </YellowBand>
        <TagBody>
          <AddRow>
            <AddBadge>
              <svg width="18" height="18" viewBox="0 0 18 18" stroke="#fff" strokeWidth="3"><path d="M9 0v18M0 9h18" /></svg>
            </AddBadge>
            add portfolio
          </AddRow>
          <PartOf>This tag is part of 4 portfolios:</PartOf>
          {CARDS.map(([t, c, n, isNew, chev]) => (
            <PCard key={t}>
              <PGrid>
                <PKey>Portfolio</PKey><PTitle>{t}</PTitle>
                <PKey>Created</PKey><span>{c}</span>
                <PKey>Products</PKey><span>{n}</span>
              </PGrid>
              {isNew && <PNew>new</PNew>}
              <PSub><PSubKey>IT Infrastructure Environment</PSubKey>Dev individual DBA</PSub>
              {chev && <PChevron><Chevron /></PChevron>}
            </PCard>
          ))}
        </TagBody>
        <Snack>Portfolio added<Undo>UNDO</Undo></Snack>
      </Phone>

      {/* F */}
      <Phone $x={44} $y={880} $w={467} $h={830}>
        <DroidStatus h={31} fs={19} s={22} pad={9} />
        <SearchRow $h={62}>
          <SearchField $fs={17.5}>
            <BackSlot $w={60} $pl={23}><ArrowBack /></BackSlot>
            <Caret $h={42} $mr={2} />Search products
            <CalInline $mr={23}><Calendar w={25} h={26} /></CalInline>
          </SearchField>
        </SearchRow>
        <HistoryList $h={383} $bg="#fff" $pt={34} $pl={16} $gap={29}>
          <HistoryItems items={HISTORY} iw={50} />
        </HistoryList>
        <Keyboard top={17} pitch={67.5} fs={32} up={10} bar={31} />
        <Nav h={63} s={28} color="#aaa" />
      </Phone>

      {/* G */}
      <Phone $x={220} $y={1038} $w={473} $h={705}>
        <DroidStatus h={32} fs={19} s={22} pad={9} />
        <SearchRow $h={56} $flat>
          <SearchField $fs={17.5} $pt={3}>
            <BackSlot $w={61} $pl={24}><ArrowBack /></BackSlot>
            <Caret $h={42} $mr={2} />Search products
          </SearchField>
        </SearchRow>
        <DarkTitle $h={49} $pl={21} $fs={22.5}>Launch date</DarkTitle>
        <DateForm cfg={FORM_G} />
        <HistoryList $h={123} $pt={8} $pl={17} $gap={30}>
          <HistoryItems items={['production', 'protection manager']} iw={51} />
        </HistoryList>
        <Keyboard top={18} pitch={67.5} fs={32} up={9} />
      </Phone>

      {/* H */}
      <Phone $x={592} $y={984} $w={498} $h={759}>
        <DroidStatus h={33} fs={20} s={24} pad={9} />
        <SearchRow $h={59} $bg="#4c4c4c" $flat>
          <SearchField $w={429} $fs={18.5} $pt={3}>
            <BackSlot $w={64} $pl={24}><ArrowBack size={22} /></BackSlot>
            <Caret $h={44} $t={1.5} $mr={1} />Search products
          </SearchField>
          <CalSlot><Calendar color="#fff" w={24} h={27} /></CalSlot>
        </SearchRow>
        <DarkTitle $h={52} $pl={22} $fs={23.5}>Launch date</DarkTitle>
        <DateForm cfg={FORM_H} filled />
        <HistoryList $h={129} $pt={9} $pl={18} $gap={33}>
          <HistoryItems items={['production', 'protection manager']} iw={52} />
        </HistoryList>
        <Keyboard top={19} pitch={71} fs={33} up={10} off={11.5} fab={46} lift={-24} />
      </Phone>

      {/* I */}
      <Phone $x={1119} $y={984} $w={473} $h={759}>
        <DroidStatus h={31} fs={19} s={23} pad={9} />
        <SearchRow $h={57} $bg="#9e9e9e" $flat>
          <SearchField $w={407} $fs={17.5} $pt={3}>
            <BackSlot $w={60.5} $pl={23}><ArrowBack /></BackSlot>
            <Caret $h={42} $t={1.5} $mr={2} />Search products
          </SearchField>
          <CalSlot><Calendar color="#f0f0f0" /></CalSlot>
        </SearchRow>
        <RangeBand>From: 9/15/2017&nbsp;&nbsp;To: 9/25/2017</RangeBand>
        <HistoryList $h={362} $pt={16} $pl={17} $gap={30}>
          <HistoryItems items={HISTORY} iw={50} />
        </HistoryList>
        <Keyboard top={20} pitch={66.5} fs={32} up={11} bar={31} fab={46} lift={-10} />
      </Phone>

      <Banner $x={558} $y={896} $w={811} $fs={37.05}>Integrating date constraint for searches</Banner>

      <Arrows />
    </Canvas>
  );
}

const ArrowLayer = styled.svg`
  position: absolute;
  left: 0;
  top: 0;
  pointer-events: none;
`;

function Arrows() {
  const c = '#c94be4';
  return (
    <ArrowLayer width="1647" height="1743" viewBox="0 0 1647 1743" fill="none">
      <g stroke={c} strokeLinecap="round" opacity=".97">
        <path d="M502 948C520 958 532 975 545 999" strokeWidth="9" />
        <path d="M437 1238C470 1250 560 1250 675 1200" strokeWidth="9" />
        <path d="M1033 1337C1200 1340 1430 1290 1504 1150" strokeWidth="9" />
      </g>
      <g fill={c} opacity=".97">
        <path d="M561.5 998L534 1014l32 24z" />
        <path d="M671 1183l42-4-25.500 33z" />
        <path d="M1524 1112l-31.500 27 30.500 14z" />
      </g>
    </ArrowLayer>
  );
}
